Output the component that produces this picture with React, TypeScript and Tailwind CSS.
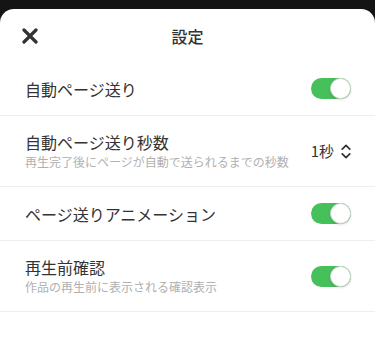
const font = { fontFamily: '"Noto Sans CJK JP", "Noto Sans", sans-serif' };

type Row = {
  title: string;
  note?: string;
  kind: 'toggle' | 'select';
};

const rows: Row[] = [
  { title: '自動ページ送り', kind: 'toggle' },
  { title: '自動ページ送り秒数', note: '再生完了後にページが自動で送られるまでの秒数', kind: 'select' },
  { title: 'ページ送りアニメーション', kind: 'toggle' },
  { title: '再生前確認', note: '作品の再生前に表示される確認表示', kind: 'toggle' },
];

function Toggle() {
  return (
    <div className="flex h-[21px] w-[40px] items-center justify-end rounded-full bg-[#45c05a]">
      <div className="h-[21px] w-[21px] rounded-full border border-[#d4d4d4] bg-white shadow-sm" />
    </div>
  );
}

function Seconds() {
  return (
    <div className="flex items-center gap-[7px] text-[15px] text-[#333]">
      <span>1秒</span>
      <svg width="10" height="15" viewBox="0 0 10 15" fill="none" stroke="#333" strokeWidth="1.7" strokeLinecap="round" strokeLinejoin="round">
        <path d="M1.2 5.2 5 1.4l3.8 3.8" />
        <path d="M1.2 9.8 5 13.6l3.8-3.8" />
      </svg>
    </div>
  );
}

export default function App() {
  return (
    <div className="h-[337px] w-[375px] overflow-hidden bg-[#141414] pt-[9px]" style={font}>
      <div className="h-full rounded-t-[14px] bg-white">
        <div className="relative flex h-[53px] items-center justify-center">
          <svg className="absolute left-[22px] top-[19px]" width="16" height="16" viewBox="0 0 16 16" stroke="#333" strokeWidth="3.2" strokeLinecap="round">
            <path d="M2 2l12 12M14 2 2 14" />
          </svg>
          <span className="text-[16px] font-medium text-[#333]">設定</span>
        </div>
        {rows.map((row) => (
          <div
            key={row.title}
            className={`flex items-center justify-between border-b border-[#efefef] pl-[25px] pr-[24px] ${row.note ? 'h-[71px]' : 'h-[54px]'}`}
          >
            <div className="flex flex-col">
              <span className="text-[16px] leading-[22px] text-[#333]">{row.title}</span>
              {row.note && <span className="text-[12px] leading-[18px] text-[#b0b0b0]">{row.note}</span>}
            </div>
            {row.kind === 'toggle' ? <Toggle /> : <Seconds />}
          </div>
        ))}
      </div>
    </div>
  );
}
